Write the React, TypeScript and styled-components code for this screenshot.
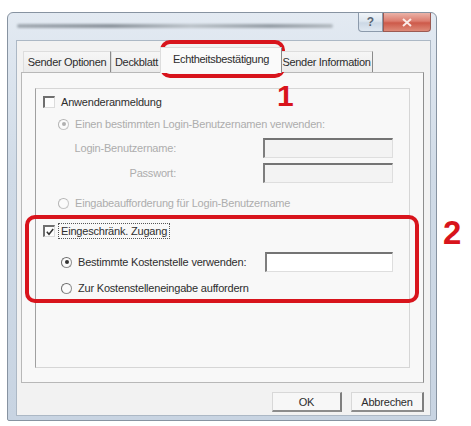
import styled, { createGlobalStyle } from 'styled-components';

const GlobalStyle = createGlobalStyle`
  html, body {
    margin: 0;
    padding: 0;
    background: #ffffff;
  }
  body {
    font-family: "Liberation Sans", Arial, sans-serif;
  }
`;

const Page = styled.div`
  position: relative;
  width: 471px;
  height: 426px;
  padding: 12px 0 0 7px;
  box-sizing: border-box;
  overflow: hidden;
`;

const Window = styled.div`
  width: 430px;
  height: 409px;
  box-sizing: border-box;
  border: 1px solid #8793a1;
  border-radius: 6px 6px 2px 2px;
  background: linear-gradient(180deg, #e3eaf2 0%, #d0dbe7 40%, #c8d4e2 100%);
  padding: 0 5px 4px 8px;
  display: flex;
  flex-direction: column;
`;

const TitleBar = styled.div`
  height: 27px;
  display: flex;
  align-items: flex-start;
  flex-shrink: 0;
`;

const TitleSmudge = styled.div`
  margin: 11px 0 0 1px;
  width: 316px;
  height: 4px;
  border-radius: 2px;
  background: linear-gradient(90deg, #a3abb4 0%, #8c949d 30%, #bcc3ca 55%, #959da6 80%, #b4bbc2 100%);
  filter: blur(1px);
`;

const CaptionButtons = styled.div`
  margin-left: auto;
  display: flex;
`;

const CaptionButton = styled.div<{ $w: number; $close?: boolean }>`
  width: ${(p) => p.$w}px;
  height: 19px;
  box-sizing: border-box;
  border: 1px solid ${(p) => (p.$close ? '#9c5a52' : '#8c9aab')};
  border-top: none;
  border-radius: ${(p) => (p.$close ? '0 0 4px 0' : '0 0 0 4px')};
  background: ${(p) =>
    p.$close
      ? 'linear-gradient(180deg, #ebb3a8 0%, #dc7c6e 45%, #cd5a4a 55%, #de8a78 100%)'
      : 'linear-gradient(180deg, #f0f4f8 0%, #dde6ef 45%, #ccd8e5 55%, #dfe8f1 100%)'};
  display: flex;
  align-items: center;
  justify-content: center;
  color: #5a6776;
  font-size: 12px;
  font-weight: bold;
`;

const Content = styled.div`
  flex: 1;
  background: #f2f2f2;
  border: 1px solid #acb8c5;
  padding: 0 6px 0 4px;
  display: flex;
  flex-direction: column;
`;

const TabStrip = styled.div`
  height: 31px;
  display: flex;
  align-items: flex-end;
  padding-left: 2px;
  flex-shrink: 0;
`;

const Tab = styled.div<{ $w: number; $active?: boolean }>`
  width: ${(p) => p.$w}px;
  height: ${(p) => (p.$active ? 26 : 21)}px;
  box-sizing: border-box;
  margin: 0 ${(p) => (p.$active ? -2 : 0)}px ${(p) => (p.$active ? -1 : 0)}px;
  position: relative;
  z-index: ${(p) => (p.$active ? 2 : 1)};
  display: flex;
  align-items: center;
  justify-content: center;
  font-size: 11px;
  letter-spacing: -0.3px;
  color: #2c2c2c;
  background: ${(p) => (p.$active ? '#fafafa' : 'linear-gradient(180deg, #f6f6f6, #ebebeb)')};
  border: 1px solid #dddddd;
  border-right-color: #8a8a8a;
  border-bottom: none;
  padding-bottom: ${(p) => (p.$active ? 3 : 0)}px;
`;

const Panel = styled.div`
  height: 311px;
  box-sizing: border-box;
  border: 1px solid #b8b8b8;
  border-right-color: #8e8e8e;
  background: #f8f8f8;
  padding: 15px 13px 14px 13px;
  display: flex;
`;

const Group = styled.div`
  flex: 1;
  border: 1px solid #d6d6d6;
  border-left-color: #a0a0a0;
  padding: 2px 0 0 7px;
  display: flex;
  flex-direction: column;
`;

const Row = styled.div<{ $indent?: number; $top?: number; $h?: number }>`
  height: ${(p) => p.$h ?? 22}px;
  margin-top: ${(p) => p.$top ?? 0}px;
  padding-left: ${(p) => p.$indent ?? 0}px;
  display: flex;
  align-items: center;
  flex-shrink: 0;
`;

const Label = styled.span<{ $disabled?: boolean; $focus?: boolean }>`
  font-size: 11px;
  letter-spacing: -0.2px;
  color: ${(p) => (p.$disabled ? '#adadad' : '#2e2e2e')};
  margin-left: 4px;
  padding: 1px 2px;
  outline: ${(p) => (p.$focus ? '1px dotted #555' : 'none')};
`;

const FieldLabel = styled.span`
  width: 104px;
  text-align: right;
  font-size: 11px;
  letter-spacing: -0.2px;
  color: #adadad;
`;

const TextBox = styled.div<{ $disabled?: boolean; $w?: number }>`
  margin-left: auto;
  margin-right: 16px;
  width: ${(p) => p.$w ?? 130}px;
  height: 20px;
  box-sizing: border-box;
  border: 1px solid #dedede;
  border-top: 2px solid #747474;
  border-left: 2px solid #7e7e7e;
  background: ${(p) => (p.$disabled ? '#f3f3f3' : '#ffffff')};
`;

const Box = styled.span`
  width: 12px;
  height: 12px;
  box-sizing: border-box;
  border: 1px solid #dcdcdc;
  border-top: 2px solid #6f6f6f;
  border-left: 2px solid #6f6f6f;
  background: #fdfdfd;
  display: inline-flex;
  align-items: center;
  justify-content: center;
  flex-shrink: 0;
`;

const Radio = styled.span<{ $disabled?: boolean; $checked?: boolean }>`
  width: 11px;
  height: 11px;
  box-sizing: border-box;
  border-radius: 50%;
  border: 1px solid ${(p) => (p.$disabled ? '#c6c6c6' : '#8e8e8e')};
  border-top-color: ${(p) => (p.$disabled ? '#b4b4b4' : '#6c6c6c')};
  border-left-color: ${(p) => (p.$disabled ? '#b4b4b4' : '#6c6c6c')};
  background: #fbfbfb;
  display: inline-flex;
  align-items: center;
  justify-content: center;
  flex-shrink: 0;
  &::after {
    content: '';
    display: ${(p) => (p.$checked ? 'block' : 'none')};
    width: 4px;
    height: 4px;
    border-radius: 50%;
    background: ${(p) => (p.$disabled ? '#b0b0b0' : '#333')};
  }
`;

const Footer = styled.div`
  display: flex;
  justify-content: flex-end;
  gap: 9px;
  padding: 9px 0 0 0;
`;

const Button = styled.div<{ $w: number }>`
  width: ${(p) => p.$w}px;
  height: 20px;
  box-sizing: border-box;
  border: 1px solid #d8d8d8;
  border-right: 2px solid #7e7e7e;
  border-bottom: 2px solid #8c8c8c;
  background: #f7f7f7;
  display: flex;
  align-items: center;
  justify-content: center;
  font-size: 11px;
  letter-spacing: -0.2px;
  color: #2c2c2c;
`;

const Callout = styled.div<{ $x: number; $y: number; $w: number; $h: number }>`
  position: absolute;
  left: ${(p) => p.$x}px;
  top: ${(p) => p.$y}px;
  width: ${(p) => p.$w}px;
  height: ${(p) => p.$h}px;
  box-sizing: border-box;
  border: 4px solid #d8141c;
  border-radius: 10px;
  pointer-events: none;
`;

const Marker = styled.div<{ $x: number; $y: number; $size: number }>`
  position: absolute;
  left: ${(p) => p.$x}px;
  top: ${(p) => p.$y}px;
  font-family: "Liberation Sans", Arial, sans-serif;
  font-weight: bold;
  font-size: ${(p) => p.$size}px;
  line-height: 1;
  color: #d8141c;
`;

function CheckBox({ checked }: { checked?: boolean }) {
  return (
    <Box>
      {checked && (
        <svg width="8" height="8" viewBox="0 0 8 8">
          <path d="M0.8 3.8 L3 6.3 L7.2 1" fill="none" stroke="#333" strokeWidth="1.5" />
        </svg>
      )}
    </Box>
  );
}

export default function App() {
  return (
    <>
      <GlobalStyle />
      <Page>
        <Window>
          <TitleBar>
            <TitleSmudge />
            <CaptionButtons>
              <CaptionButton $w={25}>?</CaptionButton>
              <CaptionButton $w={48} $close>
                <svg width="10" height="9" viewBox="0 0 10 9">
                  <path d="M1 1 L9 8 M9 1 L1 8" stroke="#fbeae6" strokeWidth="2" />
                </svg>
              </CaptionButton>
            </CaptionButtons>
          </TitleBar>
          <Content>
            <TabStrip>
              <Tab $w={88}>Sender Optionen</Tab>
              <Tab $w={51}>Deckblatt</Tab>
              <Tab $w={122} $active>Echtheitsbestätigung</Tab>
              <Tab $w={93}>Sender Information</Tab>
            </TabStrip>
            <Panel>
              <Group>
                <Row>
                  <CheckBox />
                  <Label>Anwenderanmeldung</Label>
                </Row>
                <Row $indent={15}>
                  <Radio $disabled $checked />
                  <Label $disabled>Einen bestimmten Login-Benutzernamen verwenden:</Label>
                </Row>
                <Row $indent={29} $h={26}>
                  <FieldLabel>Login-Benutzername:</FieldLabel>
                  <TextBox $disabled />
                </Row>
                <Row $indent={29} $h={24}>
                  <FieldLabel>Passwort:</FieldLabel>
                  <TextBox $disabled />
                </Row>
                <Row $indent={15} $top={7}>
                  <Radio $disabled />
                  <Label $disabled>Eingabeaufforderung für Login-Benutzername</Label>
                </Row>
                <Row $top={6}>
                  <CheckBox checked />
                  <Label $focus>Eingeschränk. Zugang</Label>
                </Row>
                <Row $indent={18} $top={9}>
                  <Radio $checked />
                  <Label>Bestimmte Kostenstelle verwenden:</Label>
                  <TextBox $w={128} />
                </Row>
                <Row $indent={18} $top={4}>
                  <Radio />
                  <Label>Zur Kostenstelleneingabe auffordern</Label>
                </Row>
              </Group>
            </Panel>
            <Footer>
              <Button $w={70}>OK</Button>
              <Button $w={73}>Abbrechen</Button>
            </Footer>
          </Content>
        </Window>
        <Callout $x={160} $y={40} $w={125} $h={38} />
        <Marker $x={277} $y={81} $size={30}>1</Marker>
        <Callout $x={25} $y={215} $w={394} $h={88} />
        <Marker $x={443} $y={216} $size={33}>2</Marker>
      </Page>
    </>
  );
}
